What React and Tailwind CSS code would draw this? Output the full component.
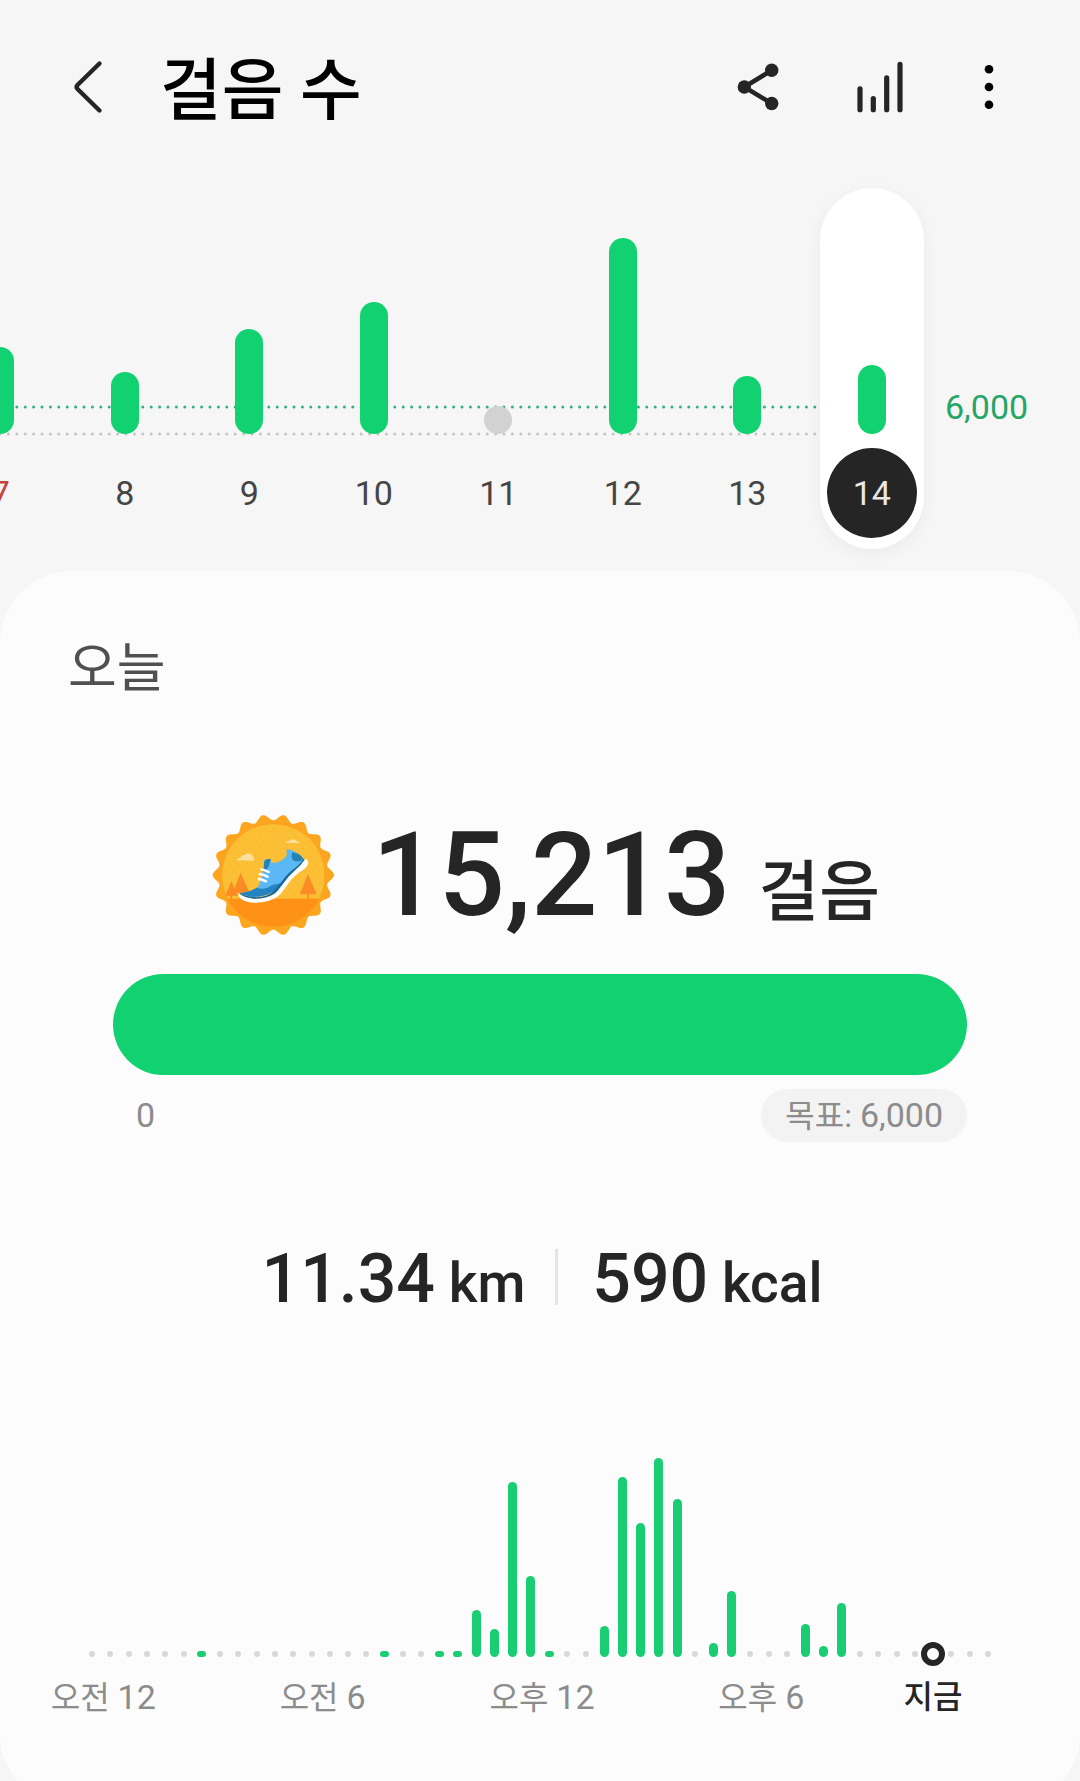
import React from "react";

const days = [
  { day: "7", height: 87, holiday: true },
  { day: "8", height: 62 },
  { day: "9", height: 105 },
  { day: "10", height: 132 },
  { day: "11", height: 0 },
  { day: "12", height: 196 },
  { day: "13", height: 58 },
  { day: "14", height: 69, selected: true },
];

const SLOT_COUNT = 50;
const NOW_SLOT = 46;
const slots = {
  6: 6, 16: 6, 19: 6, 20: 6, 21: 47, 22: 28, 23: 175, 24: 81, 25: 6,
  28: 31, 29: 180, 30: 134, 31: 199, 32: 158, 34: 14, 35: 66,
  39: 33, 40: 11, 41: 54,
};

function BackIcon() {
  return (
    <svg width="40" height="60" viewBox="0 0 40 60" fill="none" stroke="#252525" strokeWidth="4.4" strokeLinecap="round" strokeLinejoin="round" aria-hidden="true">
      <path d="M31.500 6.500 L9.500 28 Q7.500 30 9.500 32 L31.500 53.500" />
    </svg>
  );
}

function ShareIcon() {
  return (
    <svg width="48" height="60" viewBox="0 0 48 60" fill="#252525" stroke="#252525" aria-hidden="true">
      <path d="M37.700 13.300 L10.300 30 L37.700 46.500" fill="none" strokeWidth="4.600" />
      <g stroke="none">
        <circle cx="37.700" cy="13.300" r="6.700" />
        <circle cx="10.300" cy="30" r="6.700" />
        <circle cx="37.700" cy="46.500" r="6.700" />
      </g>
    </svg>
  );
}

function TrendIcon() {
  return (
    <svg width="48" height="60" viewBox="0 0 48 60" stroke="#252525" strokeWidth="5.2" strokeLinecap="round" aria-hidden="true">
      <path d="M4 31.800V52.700M17.300 41.500V52.700M30.700 20.800V52.700M44 7.300V52.700" />
    </svg>
  );
}

function MoreIcon() {
  return (
    <svg width="20" height="60" viewBox="0 0 20 60" fill="#000" aria-hidden="true">
      <circle cx="10" cy="12.300" r="4.300" />
      <circle cx="10" cy="30" r="4.300" />
      <circle cx="10" cy="47.700" r="4.300" />
    </svg>
  );
}

function scallopPath(cx, cy, base, amp, count) {
  const steps = 360;
  let d = "";
  for (let i = 0; i < steps; i++) {
    const a = (i / steps) * Math.PI * 2;
    const r = base + amp * Math.cos(a * count);
    d += `${i ? "L" : "M"}${(cx + r * Math.cos(a)).toFixed(1)} ${(cy + r * Math.sin(a)).toFixed(1)}`;
  }
  return d + "Z";
}

function Badge() {
  return (
    <svg className="size-[124px] shrink-0" viewBox="64 70 372 372" role="img" aria-label="목표 달성 배지">
      <defs>
        <clipPath id="badge-disc">
          <circle cx="248" cy="257" r="155" />
        </clipPath>
        <pattern id="badge-tri" width="26" height="36" patternUnits="userSpaceOnUse">
          <path d="M0 18L13 0L26 18Z M-13 36L0 18L13 36Z M13 36L26 18L39 36Z" fill="#f9b929" opacity="0.5" />
        </pattern>
      </defs>
      <path d={scallopPath(248, 256, 173, 9, 18)} fill="#fca61f" />
      <circle cx="248" cy="257" r="155" fill="#fcc038" />
      <g clipPath="url(#badge-disc)">
        <rect x="90" y="100" width="316" height="228" fill="url(#badge-tri)" />
        <rect x="90" y="327" width="316" height="90" fill="#ff9216" />
        <path d="M122 275L104 318H119V327H124V318H142Z" fill="#fb8b24" />
        <path d="M150 249L126 309H147V327H153V309H176Z" fill="#fb8b24" />
        <path d="M352 254L327 314H350V327H355V314H378Z" fill="#fb8b24" />
      </g>
      <circle cx="248" cy="257" r="155" fill="none" stroke="#f79a1d" strokeWidth="2" />
      <path d="M138 212Q140 205 150 204Q151 194 163 196Q168 187 178 193Q187 194 187 203Q193 206 188 213Z" fill="#fee09a" />
      <path d="M285 160Q289 154 295 155Q300 146 309 150Q314 148 317 154Q325 155 328 160Z" fill="#fee09a" />
      <path d="M144 311Q160 322 190 325Q228 329 252 310Q262 300 276 281Q292 258 310 243Q324 230 342 209Q352 208 353 220Q351 231 338 240Q312 255 296 277Q278 305 262 320Q236 340 188 339Q155 337 144 320Z" fill="#fff" />
      <path d="M146 311Q178 308 197 296Q213 285 221 212Q230 206 239 209L241 219Q268 222 288 198L288 179Q318 181 338 207Q334 222 309 239Q290 254 274 278Q258 300 244 308Q218 323 184 321Q154 317 146 311Z" fill="#5cb8f5" />
      <path d="M221 213Q230 205 241 209L236 224Q231 242 219 246Z" fill="#2583b4" />
      <path d="M305 188Q326 190 338 207Q330 218 314 215Q298 211 305 188Z" fill="#2583b4" />
      <path d="M146 311Q178 308 198 294Q224 303 244 286Q262 283 272 280Q256 300 244 308Q218 323 184 321Q154 317 146 311Z" fill="#2285c2" />
      <path d="M146 311Q165 321 190 322Q226 325 246 307Q258 296 272 277Q290 252 309 238Q330 222 338 207L342 210Q330 228 314 241Q294 258 277 282Q260 306 250 313Q226 328 188 327Q158 324 146 311Z" fill="#1468a0" />
      <path d="M212 239Q223 241 234 247M207 253Q219 254 231 261M204 268Q214 269 226 275" stroke="#fff" strokeWidth="7" strokeLinecap="round" fill="none" />
      <path d="M172 333L176 339M196 335L199 341M221 332L225 338M246 322L251 328M266 304L272 309" stroke="#d9e6ee" strokeWidth="2" />
    </svg>
  );
}

function DottedLine({ color }) {
  return (
    <svg className="block h-1 w-full" aria-hidden="true">
      <line x1="0" y1="2" x2="100%" y2="2" stroke={color} strokeWidth="3" strokeLinecap="round" strokeDasharray="0 8.400" />
    </svg>
  );
}

function DayColumn({ day, height, holiday, selected }) {
  return (
    <button
      type="button"
      aria-pressed={!!selected}
      className={`mx-auto flex w-[104px] flex-col items-center rounded-full pb-[11px] ${selected ? "bg-white shadow-[0_4px_16px_rgba(0,0,0,0.05)]" : ""}`}
    >
      <span className="flex h-[246px] items-end">
        <span
          className={`block min-h-7 w-7 rounded-full ${height ? "bg-[#12d170]" : "bg-[#d2d2d2]"}`}
          style={{ height }}
        />
      </span>
      <span
        className={`mt-[14px] flex size-[90px] items-center justify-center rounded-full text-[34px] [font-kerning:none] ${
          selected ? "bg-[#252525] text-[#e8e8e8]" : holiday ? "text-[#c5423c]" : "text-[#454545]"
        }`}
      >
        {day}
      </span>
    </button>
  );
}

function Slot({ index }) {
  if (index === NOW_SLOT) {
    return (
      <div className="flex flex-1 items-end justify-center">
        <span className="-mx-1 -mb-[9px] block size-6 shrink-0 rounded-full border-[6px] border-[#252525] bg-[#fcfcfc]" />
      </div>
    );
  }
  const h = slots[index];
  return (
    <div className="flex flex-1 items-end justify-center">
      {h ? (
        <span className="block w-[9px] rounded-full bg-[#19ce72]" style={{ height: h }} />
      ) : (
        <span className="block size-[6px] rounded-full bg-[#d9d9d9]" />
      )}
    </div>
  );
}

function HourLabel({ period, hour, className }) {
  return (
    <span className={`col-span-2 flex items-baseline justify-center gap-2 pl-1 ${className}`}>
      <span className="text-[32px]">{period}</span>
      <span>{hour}</span>
    </span>
  );
}

export default function App() {
  return (
    <div className="flex h-screen flex-col overflow-hidden bg-[#f6f6f6] font-['Roboto','Noto_Sans_CJK_KR',sans-serif] text-[#252525]">
      <header className="flex h-[174px] shrink-0 items-center pr-[81px] pl-[68px]">
        <button type="button" aria-label="뒤로"><BackIcon /></button>
        <h1 className="ml-[52px] flex-1 pt-2 text-[67px] leading-[80px] font-medium text-black">걸음 수</h1>
        <div className="flex items-center">
          <button type="button" aria-label="공유"><ShareIcon /></button>
          <button type="button" aria-label="통계" className="ml-[74px]"><TrendIcon /></button>
          <button type="button" aria-label="더보기" className="ml-[75px]"><MoreIcon /></button>
        </div>
      </header>

      <main className="flex-1 overflow-x-hidden overflow-y-auto [scrollbar-width:none]">
        <section aria-label="일별 걸음 수" className="relative flex overflow-hidden pt-[14px] pb-[22px]">
          <div className="absolute top-[231px] right-[261px] left-0"><DottedLine color="#2db37b" /></div>
          <div className="absolute top-[258px] right-[261px] left-0"><DottedLine color="#c4c4c4" /></div>
          <div className="relative -ml-[62px] grid flex-1 grid-cols-8">
            {days.map((d) => (
              <DayColumn key={d.day} {...d} />
            ))}
          </div>
          <p className="mt-[199px] w-[146px] pl-[11px] text-[34px] leading-[40px] text-[#27a567]">6,000</p>
        </section>

        <section className="rounded-[72px] bg-[#fcfcfc] pt-[66px] pb-[86px]">
          <h2 className="pl-[68px] text-[53px] leading-[64px] text-[#505050]">오늘</h2>

          <div className="mt-[104px] flex items-end justify-center pl-3">
            <div className="mb-[8px]"><Badge /></div>
            <p className="ml-[36px] flex items-baseline font-medium">
              <span className="text-[117px] leading-[140px]">15,213</span>
              <span className="ml-[28px] text-[66px] leading-[80px]">걸음</span>
            </p>
          </div>

          <div className="mx-[113px] mt-[29px]">
            <div
              role="progressbar"
              aria-label="걸음 수 목표"
              aria-valuemin={0}
              aria-valuemax={6000}
              aria-valuenow={6000}
              className="h-[101px] rounded-full bg-[#12d170]"
            />
            <div className="mt-[14px] flex items-center justify-between text-[34px] leading-[53px] text-[#8c8c8c]">
              <span className="pl-[23px]">0</span>
              <button type="button" className="h-[53px] rounded-full bg-[#f3f3f3] px-6">
                <span className="text-[32px]">목표: </span>6,000
              </button>
            </div>
          </div>

          <div className="mt-[97px] flex items-center justify-center pl-1 font-medium">
            <p className="text-[68px] leading-[80px]">11.34<span className="text-[55px]"> km</span></p>
            <span className="mr-[34px] mb-2 ml-[30px] h-14 w-[3px] bg-[#e4e4e4]" />
            <p className="text-[68px] leading-[80px]">590<span className="text-[55px]"> kcal</span></p>
          </div>

          <div className="mx-[83px] mt-[135px]">
            <div className="flex h-[199px]">
              {Array.from({ length: SLOT_COUNT }, (_, i) => (
                <Slot key={i} index={i} />
              ))}
            </div>
            <div className="mt-[18px] grid grid-cols-[repeat(50,minmax(0,1fr))] text-[34px] leading-[44px] whitespace-nowrap text-[#8c8c8c]">
              <HourLabel period="오전" hour="12" className="col-start-1" />
              <HourLabel period="오전" hour="6" className="col-start-13" />
              <HourLabel period="오후" hour="12" className="col-start-25" />
              <HourLabel period="오후" hour="6" className="col-start-37" />
              <span className="col-start-47 flex justify-center text-[32px] font-medium text-[#252525]">지금</span>
            </div>
          </div>
        </section>
      </main>
    </div>
  );
}
